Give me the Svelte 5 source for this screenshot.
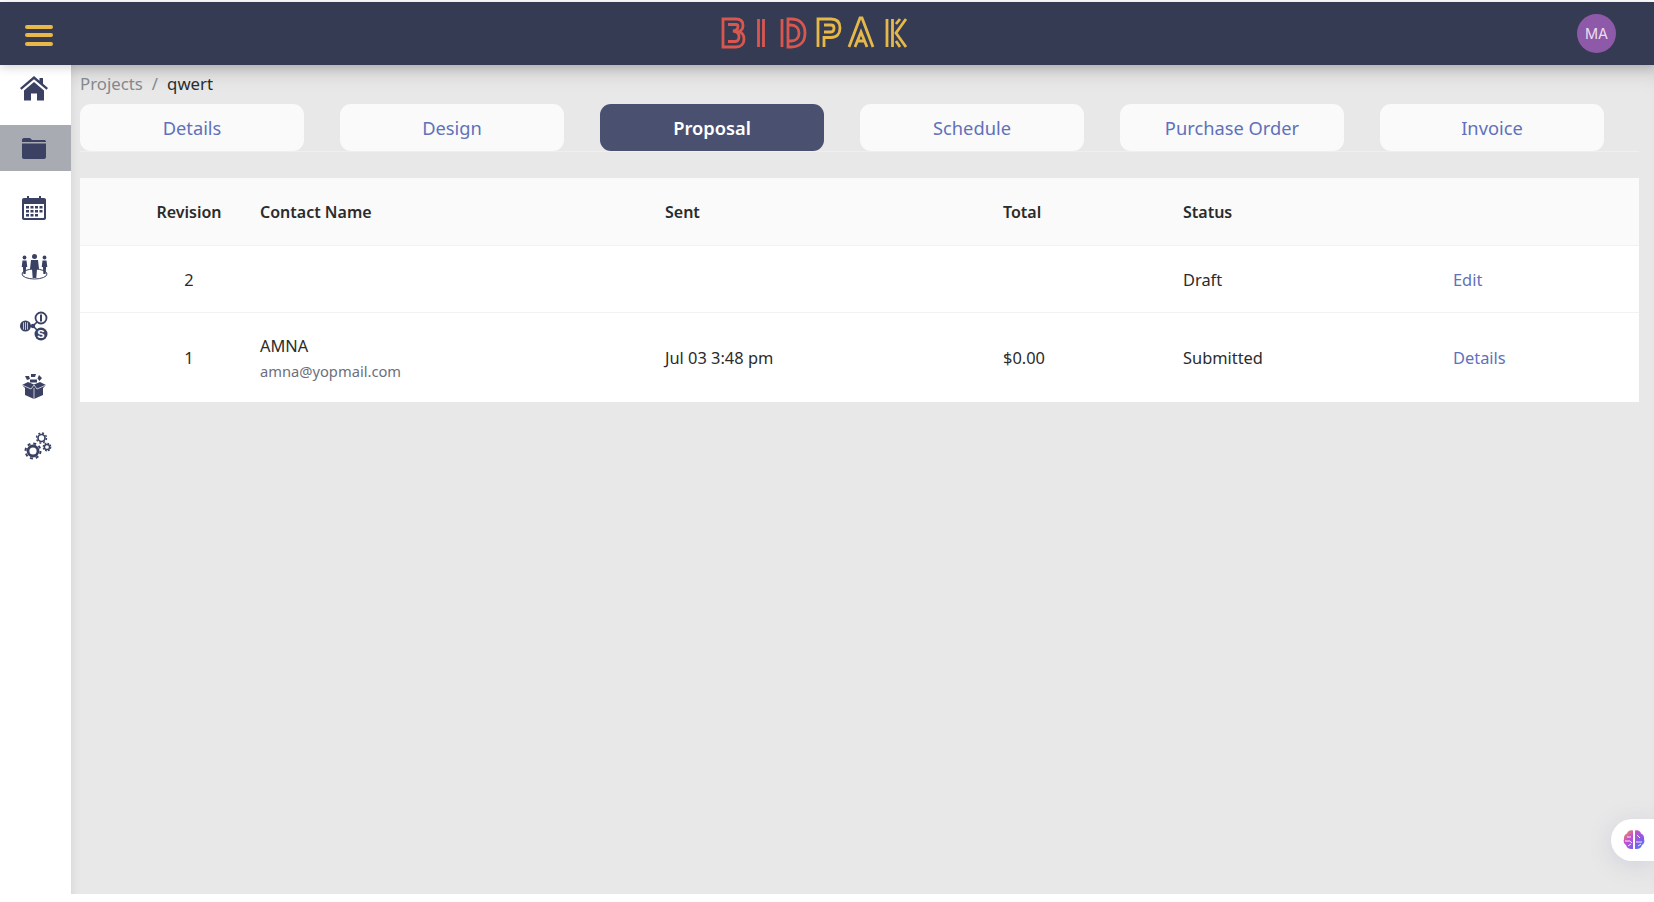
<script lang="ts">
  const tabs = ["Details", "Design", "Proposal", "Schedule", "Purchase Order", "Invoice"];
  const active = "Proposal";
</script>

<div class="page">
  <header class="topbar">
    <button class="burger" type="button" aria-label="Menu">
      <span></span><span></span><span></span>
    </button>
    <svg class="logo" viewBox="0 0 190 34" width="190" height="34" fill="none" stroke-width="2.800">
      <g stroke="#d9574f">
        <path d="M3 3h13c5 0 7 2.500 7 6.500 0 3-1.500 5-4 6 3 1 5 3.500 5 7.500 0 5-3 8-8 8H3z" />
        <path d="M8 8.500h8c1.500 0 2 .7 2 2 0 2.500-2 4-5 4.500 4 .5 6 2 6 5.500 0 3-1.500 5-4 5H8" />
        <path d="M38.500 3v28M43.500 3v28" />
        <path d="M62 3v28M68 3h3c9 0 14 5 14 14s-5 14-14 14h-3z" />
        <path d="M68 9h3c5 0 8 3 8 8s-3 8-8 8h-3" />
      </g>
      <g stroke="#e6b84a">
        <path d="M98 31V3h13c6 0 9 3.500 9 9s-3 9.500-9 9.500h-7V31" />
        <path d="M104 9h7c2 0 3 1 3 3s-1 4-3 4h-7" />
        <path d="M129 31l11-29h2l11 29M135 31l6-15 6 15M138 25h6" />
        <path d="M167 3v28M172.500 3v28M186 3l-10 14 10 14M180 3l-4 5M180 31l-4-6" />
      </g>
    </svg>
    <div class="avatar">MA</div>
  </header>

  <div class="body">
    <nav class="sidenav">
      <a class="navitem" href="#home" aria-label="Home">
        <svg viewBox="0 0 28 25" width="28" height="25"><path fill="#3a4163" d="M14 0 0 12l1.500 1.800L14 3.200l12.500 10.600L28 12l-5-4.300V2h-3.500v2.700zM4 14.500V24.500h7v-7h6v7h7v-10L14 6z" /></svg>
      </a>
      <a class="navitem on" href="#projects" aria-label="Projects">
        <svg viewBox="0 0 26 23" width="26" height="23"><path fill="#3a4163" d="M1 3c0-1 .6-2 2-2h6l2 2h12c1 0 2 .6 2 2H1zM1 6.500h24V20c0 1-.8 2-2 2H3c-1.200 0-2-1-2-2z" /></svg>
      </a>
      <a class="navitem" href="#calendar" aria-label="Calendar">
        <svg viewBox="0 0 26 26" width="26" height="26"><path fill="#3a4163" fill-rule="evenodd" d="M3 3h3V1h2v2h10V1h2v2h3c1.200 0 2 .8 2 2v18c0 1.200-.8 2-2 2H3c-1.200 0-2-.8-2-2V5c0-1.200.8-2 2-2zM3 9v13.500c0 .3.200.5.500.5h19c.3 0 .5-.2.500-.5V9zM5 11h3v2.500H5zm4.500 0h3v2.500h-3zm4.500 0h3v2.500h-3zm4.500 0h3v2.500h-3zM5 15h3v2.500H5zm4.500 0h3v2.500h-3zm4.500 0h3v2.500h-3zm4.500 0h3v2.500h-3zM5 19h3v2.500H5zm4.500 0h3v2.500h-3zm4.500 0h3v2.500h-3z" /></svg>
      </a>
      <a class="navitem tight" href="#team" aria-label="Team">
        <svg viewBox="0 0 29 26" width="29" height="26" fill="#3a4163">
          <ellipse cx="14.500" cy="20" rx="12.500" ry="5" fill="none" stroke="#3a4163" stroke-width="1" />
          <circle cx="14.500" cy="2.500" r="2.500" /><path d="M11 6h7l1 9h-2l-.7 9h-3.600L12 15h-2z" />
          <circle cx="4.500" cy="3.500" r="1.900" /><path d="M2.500 6.500h4l.8 6.500h-1.200L5.600 20H3.400L2.900 13H1.700z" />
          <circle cx="24.500" cy="3.500" r="1.900" /><path d="M22.500 6.500h4l.8 6.500h-1.200L25.600 20h-2.200l-.5-7h-1.200z" />
        </svg>
      </a>
      <a class="navitem tight" href="#finance" aria-label="Finance">
        <svg viewBox="0 0 28 30" width="28" height="30">
          <path stroke="#3a4163" stroke-width="1.600" fill="none" d="M6 15h7l8-8M13 15l8 8" />
          <circle cx="5.500" cy="15" r="5.500" fill="#3a4163" />
          <path d="M3.500 11.500v7M5.500 11v8M7.500 11.500v7" stroke="#fff" stroke-width=".7" />
          <circle cx="13" cy="15" r="2.200" fill="#3a4163" />
          <circle cx="21" cy="7" r="5.500" fill="#fff" stroke="#3a4163" stroke-width="1.800" />
          <path d="M21 3.500v7" stroke="#3a4163" stroke-width="2" />
          <circle cx="21" cy="23" r="6.500" fill="#3a4163" />
          <text x="21" y="27" text-anchor="middle" class="coin">S</text>
        </svg>
      </a>
      <a class="navitem" href="#products" aria-label="Products">
        <svg viewBox="0 0 24 26" width="24" height="26" fill="#3a4163">
          <path d="M0 12l6-3 6 2.500L18 9l6 3-3 3v7l-9 4-9-4v-7z" />
          <path d="M12 15v11M0 12l9 4 3-4 3 4 9-4" stroke="#fff" stroke-width=".7" fill="none" />
          <path d="M3 3h4l1 3-3 1zM9 1h5l-1 3H9zM17 2l3 3-2.500 3-2-2.500zM8 6.500h7v3H8z" />
        </svg>
      </a>
      <a class="navitem gears" href="#settings" aria-label="Settings">
        <svg viewBox="0 0 28 28" width="28" height="28" fill="none" stroke="#3a4163">
          <circle cx="9" cy="19" r="5" stroke-width="2.800" />
          <circle cx="9" cy="19" r="7.500" stroke-width="2" stroke-dasharray="3 2.890" />
          <circle cx="17.500" cy="6" r="3.500" stroke-width="1.700" />
          <circle cx="17.500" cy="6" r="5" stroke-width="1.400" stroke-dasharray="2 1.930" />
          <circle cx="23" cy="15" r="2.600" stroke-width="1.500" />
          <circle cx="23" cy="15" r="3.800" stroke-width="1.200" stroke-dasharray="1.800 1.180" />
        </svg>
      </a>
    </nav>

    <main class="content">
      <div class="crumbs">
        <span class="muted">Projects</span>
        <span class="muted">/</span>
        <span>qwert</span>
      </div>

      <div class="tabs">
        {#each tabs as tab}
          <button class="tab" class:current={tab === active} type="button">{tab}</button>
        {/each}
      </div>

      <div class="card">
        <div class="row head">
          <div class="rev">Revision</div>
          <div>Contact Name</div>
          <div>Sent</div>
          <div>Total</div>
          <div>Status</div>
          <div></div>
        </div>
        <div class="row draft">
          <div class="rev">2</div>
          <div></div>
          <div></div>
          <div></div>
          <div>Draft</div>
          <div><a href="#edit">Edit</a></div>
        </div>
        <div class="row sent">
          <div class="rev">1</div>
          <div class="contact">
            <span>AMNA</span>
            <small>amna@yopmail.com</small>
          </div>
          <div>Jul 03 3:48 pm</div>
          <div>$0.00</div>
          <div>Submitted</div>
          <div><a href="#details">Details</a></div>
        </div>
      </div>
    </main>
  </div>

  <button class="assist" type="button" aria-label="Assistant">
    <svg viewBox="0 0 24 24" width="24" height="24">
      <defs>
        <linearGradient id="brain" x1="0" y1="0" x2="1" y2="1">
          <stop offset="0" stop-color="#f0a13c" />
          <stop offset=".35" stop-color="#c64fd0" />
          <stop offset=".7" stop-color="#7d5cf0" />
          <stop offset="1" stop-color="#3f8cf5" />
        </linearGradient>
      </defs>
      <path fill="url(#brain)" d="M11 2.500c-3-1-5.500.8-6 3-2 .8-3.500 3-3 5.500-1 2.500 0 5 2 6 .5 2.500 3 4.500 7 4zM13 2.500c3-1 5.500.8 6 3 2 .8 3.500 3 3 5.500 1 2.500 0 5-2 6-.5 2.500-3 4.500-7 4z" />
      <path stroke="#fff" stroke-width=".9" fill="none" d="M5 9h4M3 13h5l2 2M6 18l3-2M15 7l3 3M14 14h6M16 18l3-2" />
    </svg>
  </button>
</div>

<style>
  :global(body) {
    margin: 0;
    background: #fff;
    font-family: "Noto Sans", "Open Sans", sans-serif;
    color: #2b2b2b;
  }

  .page {
    position: relative;
    height: 902px;
    padding: 2px 0 8px;
    box-sizing: border-box;
    display: flex;
    flex-direction: column;
    overflow: hidden;
  }

  .topbar {
    height: 63px;
    flex: none;
    background: #353b52;
    display: flex;
    align-items: center;
    justify-content: space-between;
    padding: 0 38px 0 25px;
    position: relative;
    z-index: 2;
    box-shadow: 0 2px 10px rgba(0, 0, 0, 0.18);
  }

  .burger {
    width: 28px;
    height: 21px;
    padding: 0;
    border: 0;
    background: none;
    display: flex;
    flex-direction: column;
    justify-content: space-between;
    margin-top: 3px;
  }

  .burger span {
    height: 4px;
    border-radius: 2px;
    background: #e8b949;
  }

  .logo {
    position: absolute;
    left: 720px;
    top: 14px;
  }

  .avatar {
    width: 39px;
    height: 39px;
    border-radius: 50%;
    background: #8e59a8;
    color: #e9dff0;
    font: 14.500px/39px "Inter", sans-serif;
    text-align: center;
    margin-top: -1px;
  }

  .body {
    flex: 1;
    min-height: 0;
    display: flex;
  }

  .sidenav {
    width: 71px;
    flex: none;
    background: #fff;
    display: flex;
    flex-direction: column;
    gap: 14px;
    box-sizing: border-box;
  }

  .navitem {
    height: 46px;
    display: flex;
    align-items: center;
    justify-content: center;
    padding-right: 3px;
  }

  .navitem.tight {
    margin-top: -1px;
  }

  .navitem.on {
    background: #a8abb1;
  }

  .navitem.gears {
    padding-right: 0;
    padding-left: 4px;
  }

  .content {
    flex: 1;
    min-width: 0;
    background: #e8e8e8;
    padding: 0 15px 0 9px;
    box-shadow:
      inset 0 22px 20px -14px rgba(0, 0, 0, 0.13),
      inset 12px 0 10px -10px rgba(0, 0, 0, 0.06);
  }

  .crumbs {
    display: flex;
    gap: 9px;
    height: 39px;
    padding-bottom: 2px;
    align-items: center;
    font-size: 16.800px;
    box-sizing: border-box;
  }

  .muted {
    color: #85878c;
  }

  .tabs {
    display: flex;
    gap: 36px;
    padding-right: 35px;
    border-bottom: 1px solid #efefef;
    height: 48px;
    box-sizing: border-box;
  }

  .tab {
    flex: 1;
    height: 47px;
    border: 0;
    border-radius: 11px;
    background: #fafafa;
    color: #6071ba;
    font: 18.300px "Noto Sans", sans-serif;
    padding: 0;
  }

  .tab.current {
    background: #4a506f;
    color: #fff;
    font-weight: 600;
  }

  .card {
    margin-top: 26px;
    background: #fff;
  }

  .row {
    display: grid;
    grid-template-columns: 180px 405px 338px 180px 270px 1fr;
    align-items: center;
    font-size: 16.400px;
    border-bottom: 1px solid #f2f2f2;
    box-sizing: border-box;
  }

  .row:last-child {
    border-bottom: 0;
  }

  .row.head {
    height: 68px;
    background: #fafafa;
    font-weight: 600;
    font-size: 16px;
  }

  .row.draft {
    height: 67px;
  }

  .row.sent {
    height: 89px;
  }

  .rev {
    text-align: center;
    padding-left: 38px;
  }

  .contact {
    display: flex;
    flex-direction: column;
    gap: 4px;
  }

  .contact small {
    font-size: 14.700px;
    color: #6b6f7c;
  }

  a {
    color: #6071ba;
    text-decoration: none;
  }

  .coin {
    font: 700 11px "Liberation Sans", sans-serif;
    fill: #fff;
  }

  .assist {
    position: absolute;
    right: 0;
    top: 819px;
    width: 43px;
    height: 42px;
    border: 0;
    border-radius: 21px 0 0 21px;
    background: #fff;
    box-shadow: 0 4px 24px rgba(120, 110, 160, 0.2);
    display: flex;
    align-items: center;
    justify-content: flex-start;
    padding: 0 0 0 11px;
    box-sizing: border-box;
  }
</style>
